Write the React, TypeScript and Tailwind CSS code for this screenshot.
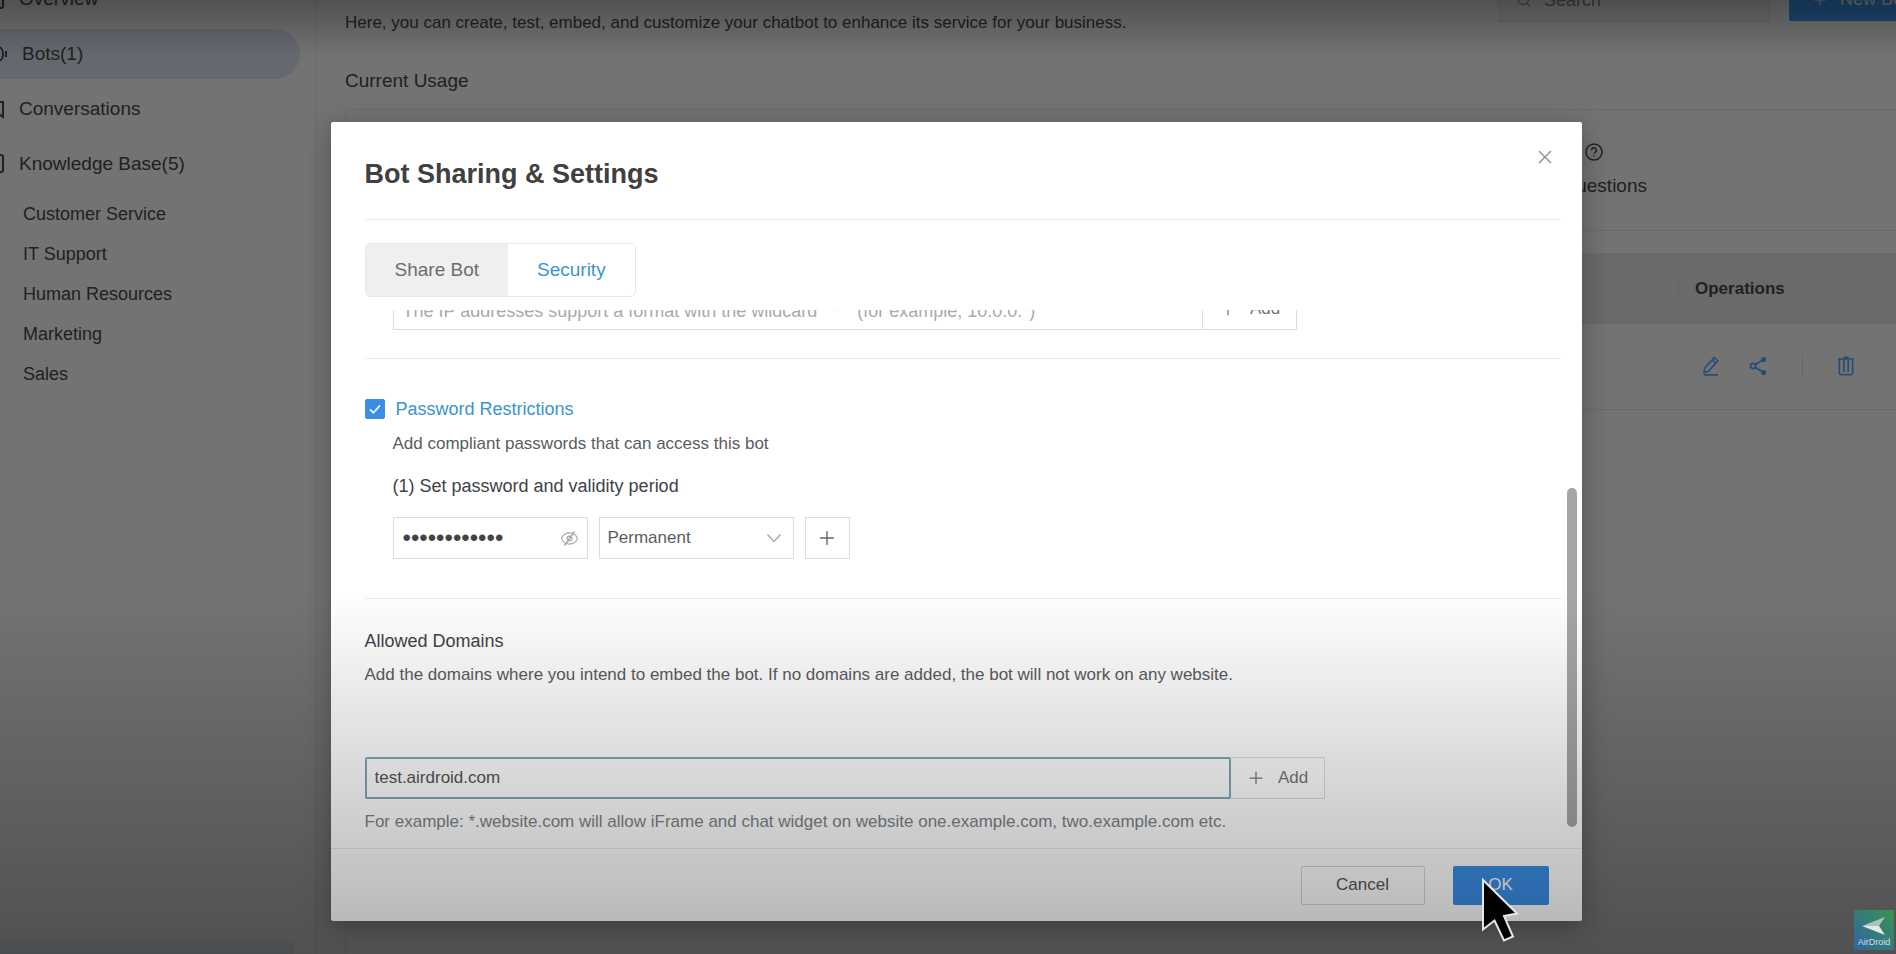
import { useState } from "react";
import { Eye, Plus, Search, X } from "lucide-react";

const folders = ["Customer Service", "IT Support", "Human Resources", "Marketing", "Sales"];

function HelpIcon() {
  return (
    <svg width="18" height="18" viewBox="0 0 18 18" fill="none" stroke="currentColor" strokeWidth="1.5">
      <circle cx="9" cy="9" r="8" />
      <path d="M6.6 7.2a2.4 2.4 0 1 1 3.4 2.1c-.7.4-1 .7-1 1.5" />
      <path d="M9 12.2v1.4" />
    </svg>
  );
}

function PencilIcon() {
  return (
    <svg width="18" height="20" viewBox="0 0 18 20" fill="none" stroke="currentColor" strokeWidth="1.6">
      <path d="M2 16.5l.8-4.6L12.2 1.6l3.6 3.2-9.4 10.4z" />
      <path d="M10.2 4l3.5 3.1M2 18.9h14" />
    </svg>
  );
}

function ShareIcon() {
  return (
    <svg width="18" height="20" viewBox="0 0 18 20" fill="none" stroke="currentColor" strokeWidth="1.8">
      <circle cx="4" cy="10" r="2.6" />
      <circle cx="14.6" cy="3.6" r="1.7" fill="currentColor" />
      <circle cx="14.6" cy="16.6" r="1.7" fill="currentColor" />
      <path d="M6.4 8.5l7-4.2M6.4 11.5l7 4.3" />
    </svg>
  );
}

function TrashIcon() {
  return (
    <svg width="18" height="20" viewBox="0 0 18 20" fill="none" stroke="currentColor" strokeWidth="1.7">
      <path d="M1 3h16M6.5 1.4h5M2.4 3v14a1.6 1.6 0 0 0 1.6 1.6h10a1.6 1.6 0 0 0 1.6-1.6V3M6.8 4v12M11.2 4v12" />
    </svg>
  );
}

function NavItem({ icon, label, active }: { icon: React.ReactNode; label: string; active?: boolean }) {
  return (
    <a
      href="#"
      className={
        active
          ? "mr-4 flex h-[50px] items-center gap-[18px] rounded-r-full bg-[#dfe9f5]"
          : "mr-4 flex h-[50px] items-center gap-[15px]"
      }
    >
      <span className="-ml-3 block w-4 shrink-0">{icon}</span>
      {label}
    </a>
  );
}

function Sidebar() {
  return (
    <aside className="flex w-[317px] shrink-0 flex-col border-r border-[#ececec] text-[#4a4a4a]">
      <nav className="-mt-[26px] flex flex-col gap-[5px] text-[19px]">
        <NavItem
          label="Overview"
          icon={
            <svg width="16" height="20" viewBox="0 0 16 20" fill="none" stroke="currentColor" strokeWidth="2">
              <rect x="1" y="1" width="14" height="18" rx="2" />
            </svg>
          }
        />
        <NavItem
          label="Bots(1)"
          active
          icon={
            <svg width="19" height="20" viewBox="0 0 19 20" fill="none" stroke="currentColor" strokeWidth="2">
              <path d="M2 3h8c3 0 5 3 5 7s-2 7-5 7H2M18 7v6" />
            </svg>
          }
        />
        <NavItem
          label="Conversations"
          icon={
            <svg width="16" height="20" viewBox="0 0 16 20" fill="none" stroke="currentColor" strokeWidth="2">
              <path d="M1 3h14v15l-4-3H1z" />
            </svg>
          }
        />
        <NavItem
          label="Knowledge Base(5)"
          icon={
            <svg width="16" height="20" viewBox="0 0 16 20" fill="none" stroke="currentColor" strokeWidth="2">
              <rect x="1" y="1" width="14" height="17" rx="2" />
            </svg>
          }
        />
      </nav>
      <ul className="mt-[5px] text-[18px]">
        {folders.map((f) => (
          <li key={f}>
            <a href="#" className="block pl-[23px] leading-10">{f}</a>
          </li>
        ))}
      </ul>
      <div className="mt-auto mr-[22px] h-[14px] rounded-tr-lg bg-[#eef6fb]" />
    </aside>
  );
}

function Main() {
  return (
    <main className="flex min-w-0 flex-1 flex-col pl-7 text-[#4a4a4a]">
      {/* content runs past the right edge */}
      <div className="-mr-11 flex flex-1 flex-col">
        <header className="-mt-[22px] flex h-[57px] items-start gap-[19px]">
          <p className="mr-auto self-end text-[17px] leading-6">
            Here, you can create, test, embed, and customize your chatbot to enhance its service for your business.
          </p>
          <label className="flex h-[44px] w-[271px] items-center gap-3 border border-[#dcdfe6] bg-[#f7f9fb] px-4 text-[#7a7a7a]">
            <Search size={18} strokeWidth={1.5} />
            <input aria-label="Search" placeholder="Search" className="w-full text-[18px] outline-none placeholder:text-[#8a8a8a]" />
          </label>
          <button className="flex h-[43px] w-[151px] items-center gap-[11px] rounded-xs bg-[#409eff] pl-[22px] text-[18px] text-white">
            <Plus size={18} strokeWidth={1.5} />
            New Bot
          </button>
        </header>

        <h2 className="mt-8 text-[19px] leading-7">Current Usage</h2>

        <section className="mt-[14px] flex h-[122px] justify-end rounded-md border border-[#ececec] pr-[292px]">
          <div className="flex flex-col items-end gap-[13px] pt-[33px]">
            <span className="mr-11"><HelpIcon /></span>
            <p className="text-[19px] leading-6">Questions</p>
          </div>
        </section>

        <section className="mt-[22px] flex-1 border-l border-[#ececec]">
          <table className="w-full table-fixed text-left">
            <thead>
              <tr className="h-[71px] bg-[#ececec]">
                <th />
                <th className="w-[262px]">
                  <span className="block border-l border-[#dcdcdc] pl-4 text-[17px] leading-6 font-bold">Operations</span>
                </th>
              </tr>
            </thead>
            <tbody>
              <tr className="h-[85px] border-b border-[#ececec]">
                <td />
                <td>
                  <div className="flex items-center pl-6 text-[#56adff]">
                    <button aria-label="Edit"><PencilIcon /></button>
                    <button aria-label="Share" className="ml-[29px]"><ShareIcon /></button>
                    <span className="ml-[35px] h-5 w-px bg-[#e2e2e2]" />
                    <button aria-label="Delete" className="ml-[34px]"><TrashIcon /></button>
                  </div>
                </td>
              </tr>
            </tbody>
          </table>
        </section>
      </div>
    </main>
  );
}

function AddButton() {
  return (
    <button className="flex h-[42px] w-[94px] items-center justify-center gap-3 border border-l-0 border-[#dcdcdc] text-[17px] text-[#777]">
      <Plus size={20} strokeWidth={1.5} />
      Add
    </button>
  );
}

function Settings() {
  const [enabled, setEnabled] = useState(true);
  const [domain, setDomain] = useState("test.airdroid.com");

  return (
    <div className="relative h-[538px] overflow-hidden pr-[21px] pl-[34px]">
      <div className="-mt-[22px] ml-7 flex">
        <input
          aria-label="IP address"
          placeholder={"The IP addresses support a format with the wildcard \" * \" (for example, 10.0.0.*)"}
          className="h-[42px] w-[810px] border border-[#dcdcdc] px-[9px] pt-1 text-[18px] outline-none placeholder:text-[#aaa]"
        />
        <AddButton />
      </div>

      <section className="mt-7 border-t border-[#ebebeb] pt-[38px]">
        <label className="flex items-center gap-[11px] text-[18px] leading-6 text-[#3b94cd]">
          <span className="relative flex">
            <input
              type="checkbox"
              checked={enabled}
              onChange={(e) => setEnabled(e.target.checked)}
              className="size-5 appearance-none rounded-xs border border-[#3a8ee6] checked:bg-[#3a8ee6]"
            />
            <svg className="pointer-events-none absolute inset-0" width="20" height="20" viewBox="0 0 20 20" fill="none" stroke="#fff" strokeWidth="1.6">
              <path d="M5 10.4l3.4 3.4L15 6.4" />
            </svg>
          </span>
          Password Restrictions
        </label>
        <div className="ml-7">
          <p className="mt-[11px] text-[17px] leading-6 text-[#5a5c60]">Add compliant passwords that can access this bot</p>
          <p className="mt-[18px] text-[18px] leading-6 text-[#404248]">(1) Set password and validity period</p>
          <div className="mt-[19px] flex gap-[11px]">
            <div className="relative">
              <input
                type="password"
                aria-label="Password"
                defaultValue="abcdefghijkl"
                className="h-[42px] w-[195px] border border-[#dcdcdc] px-[9px] text-[24px] text-[#444] outline-none"
              />
              <span className="absolute top-3 right-[9px] text-[#aaa]">
                <Eye size={19} strokeWidth={1.5} />
                <svg className="absolute inset-0" width="19" height="19" viewBox="0 0 19 19" stroke="currentColor" strokeWidth="1.5">
                  <path d="M14.5 2.5l-10 14" />
                </svg>
              </span>
            </div>
            <div className="relative">
              <select aria-label="Validity period" className="h-[42px] w-[195px] appearance-none border border-[#dcdcdc] px-2 text-[17px] text-[#5a5c60] outline-none">
                <option>Permanent</option>
              </select>
              <svg className="pointer-events-none absolute top-4 right-3" width="16" height="10" viewBox="0 0 16 10" fill="none" stroke="#aaa" strokeWidth="1.5">
                <path d="M1.5 1.5L8 8.5l6.5-7" />
              </svg>
            </div>
            <button aria-label="Add password" className="flex h-[42px] w-[45px] items-center justify-center border border-[#dcdcdc] text-[#666]">
              <Plus size={22} strokeWidth={1.5} />
            </button>
          </div>
        </div>
      </section>

      <section className="mt-[39px] border-t border-[#ebebeb] pt-[30px]">
        <h3 className="text-[18px] leading-6 text-[#404248]">Allowed Domains</h3>
        <p className="mt-[10px] text-[17px] leading-6 text-[#5a5c60]">
          Add the domains where you intend to embed the bot. If no domains are added, the bot will not work on any website.
        </p>
        <div className="mt-[70px] flex">
          <input
            aria-label="Allowed domain"
            value={domain}
            onChange={(e) => setDomain(e.target.value)}
            className="h-[42px] w-[866px] rounded-xs border-2 border-[#7fa9b6] px-2 text-[17px] text-[#555] outline-none"
          />
          <AddButton />
        </div>
        <p className="mt-[11px] text-[17px] leading-6 text-[#808388]">
          For example: *.website.com will allow iFrame and chat widget on website one.example.com, two.example.com etc.
        </p>
      </section>

      {/* scrollbar thumb */}
      <div className="absolute top-[178px] right-[5px] h-[339px] w-[10px] rounded-full bg-[#a6a6a6]" />
    </div>
  );
}

function Dialog() {
  return (
    <div role="dialog" aria-label="Bot Sharing & Settings" className="relative w-[1251px] rounded-xs bg-white shadow-[0_6px_28px_rgba(0,0,0,0.3)]">
      <div className="mr-[21px] ml-[34px] flex h-[98px] items-start justify-between border-b border-[#ebebeb]">
        <h1 className="mt-9 text-[27px] leading-8 font-bold text-[#404040]">Bot Sharing & Settings</h1>
        <button aria-label="Close" className="mt-6 mr-[5px] text-[#999]">
          <X size={22} strokeWidth={1.8} />
        </button>
      </div>
      <div className="mt-[23px] mb-[13px] ml-[34px] flex h-[54px] w-fit overflow-hidden rounded-md border border-[#e6e6e6] text-[19px]">
        <button className="bg-[#efefef] px-[29px] text-[#6b6c70]">Share Bot</button>
        <button className="bg-white px-[29px] text-[#3b94cd]">Security</button>
      </div>
      <Settings />
      <div className="flex h-[73px] items-center justify-end gap-7 border-t border-[#ebebeb] pr-[33px] text-[17px]">
        <button className="h-[39px] w-[124px] rounded-xs border border-[#d6d6d6] text-[#555]">Cancel</button>
        <div className="relative">
          <button className="h-[39px] w-24 rounded-xs bg-[#3a8ee6] text-white">OK</button>
          <svg className="pointer-events-none absolute top-3 left-7 z-20" width="38" height="66" viewBox="0 0 38 66">
            <path d="M2 2L36 35.5 23 38 32 58.5 23 62.5 13.5 42.5 2 51.5z" fill="#000" stroke="#e6e6e6" strokeWidth="2" />
          </svg>
        </div>
      </div>
    </div>
  );
}

export default function App() {
  return (
    <div className="relative flex h-screen overflow-hidden bg-white font-['Liberation_Sans',Arial,sans-serif]">
      <Sidebar />
      <Main />

      <div className="absolute inset-0 flex items-start justify-center bg-black/55 pt-[122px] pl-4">
        <Dialog />
      </div>

      {/* player shading */}
      <div className="pointer-events-none absolute inset-x-0 top-0 h-14 bg-linear-to-b from-black/30 to-transparent" />
      <div className="pointer-events-none absolute inset-x-0 bottom-0 h-[364px] bg-linear-to-t from-black/30 to-transparent" />

      <div className="absolute right-0 bottom-1 mr-0.5 flex size-10 flex-col items-center justify-end bg-linear-to-tr from-[#33629f] to-[#3d9149]">
        <svg width="26" height="18" viewBox="0 0 26 18">
          <path d="M1 9L24 0l-6 9z" fill="#a9c4bd" />
          <path d="M1 9h17l6 9z" fill="#e4e9e8" />
        </svg>
        <span className="text-[9px] leading-[15px] text-[#d5dee0]">AirDroid</span>
      </div>
    </div>
  );
}
